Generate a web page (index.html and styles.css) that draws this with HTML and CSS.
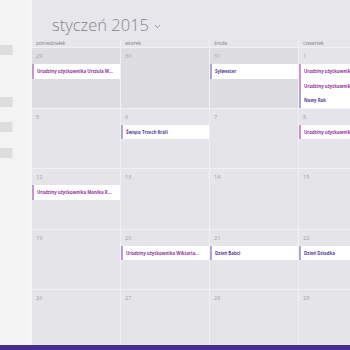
FILE: index.html
```html
<!DOCTYPE html>
<html lang="pl">
<head>
<meta charset="utf-8">
<link rel="stylesheet" href="styles.css">
</head>
<body>
<div class="app">
  <div class="top">
    <aside class="side">
      <div class="btn b1"></div>
      <div class="btn b2"></div>
      <div class="btn b3"></div>
      <div class="btn b4"></div>
    </aside>
    <main class="main">
      <header class="title">
        <span class="month">styczeń 2015</span>
        <svg class="chev" width="7" height="5" viewBox="0 0 7 5"><path d="M1 1.2 L3.5 3.6 L6 1.2" fill="none" stroke="#8a8a8e" stroke-width="0.8"/></svg>
      </header>
      <div class="grid">
        <div class="wd">poniedziałek</div>
        <div class="wd">wtorek</div>
        <div class="wd">środa</div>
        <div class="wd">czwartek</div>

        <div class="day prev"><div class="num">29</div><div class="ev bday">Urodziny użytkownika Urszula W...</div></div>
        <div class="day prev"><div class="num">30</div></div>
        <div class="day prev"><div class="num">31</div><div class="ev hol">Sylwester</div></div>
        <div class="day"><div class="num">1</div><div class="ev bday">Urodziny użytkownika</div><div class="ev bday">Urodziny użytkownika</div><div class="ev hol">Nowy Rok</div></div>

        <div class="day"><div class="num">5</div></div>
        <div class="day"><div class="num">6</div><div class="ev hol">Święto Trzech Króli</div></div>
        <div class="day"><div class="num">7</div></div>
        <div class="day"><div class="num">8</div><div class="ev bday">Urodziny użytkownika</div></div>

        <div class="day"><div class="num">12</div><div class="ev bday">Urodziny użytkownika Monika R...</div></div>
        <div class="day"><div class="num">13</div></div>
        <div class="day"><div class="num">14</div></div>
        <div class="day"><div class="num">15</div></div>

        <div class="day"><div class="num">19</div></div>
        <div class="day"><div class="num">20</div><div class="ev bday">Urodziny użytkownika Wiktoria...</div></div>
        <div class="day"><div class="num">21</div><div class="ev hol">Dzień Babci</div></div>
        <div class="day"><div class="num">22</div><div class="ev hol">Dzień Dziadka</div></div>

        <div class="day"><div class="num">26</div></div>
        <div class="day"><div class="num">27</div></div>
        <div class="day"><div class="num">28</div></div>
        <div class="day"><div class="num">29</div></div>
      </div>
    </main>
  </div>
  <div class="appbar"></div>
</div>
</body>
</html>
```

FILE: styles.css
```css
* { box-sizing: border-box; }
html, body {
  margin: 0;
  padding: 0;
  width: 350px;
  height: 350px;
  overflow: hidden;
  font-family: "Open Sans", "Noto Sans", sans-serif;
}
.app {
  width: 350px;
  height: 350px;
  display: flex;
  flex-direction: column;
}
.top {
  display: flex;
  height: 345px;
  overflow: hidden;
}
.side {
  width: 32px;
  flex: none;
  background: #f3f3f3;
  display: flex;
  flex-direction: column;
  align-items: flex-start;
  border-right: 4px solid #f6f6f6;
}
.btn {
  width: 13px;
  height: 10px;
  background: #dddddd;
  border-right: 1px solid #e9e9e9;
}
.b1 { margin-top: 45px; }
.b2 { margin-top: 42px; }
.b3 { margin-top: 15px; }
.b4 { margin-top: 16px; }
.main {
  flex: 1;
  min-width: 0;
  background: #e7e7eb;
  display: flex;
  flex-direction: column;
  overflow: hidden;
}
.title {
  height: 40px;
  flex: none;
  display: flex;
  align-items: flex-start;
  padding: 15px 0 0 20px;
  gap: 5px;
}
.month {
  font-size: 16.5px;
  line-height: 20px;
  font-weight: 300;
  color: #85858a;
  white-space: nowrap;
}
.chev { margin-top: 9px; }
.grid {
  flex: 1;
  display: grid;
  grid-template-columns: 88px 88px 88px 51px;
  grid-template-rows: 7px repeat(5, 1fr);
  gap: 1px;
  background: #f1f1f4;
  width: 318px;
}
.wd {
  background: #e7e7eb;
  font-size: 5px;
  line-height: 7px;
  color: #7a7a80;
  padding-left: 4px;
  white-space: nowrap;
}
.day {
  background: #e5e5e9;
  overflow: hidden;
  min-height: 0;
}
.day.prev { background: #dddde1; }
.num {
  height: 16px;
  line-height: 16px;
  font-size: 5.5px;
  color: #a0a0a6;
  padding-left: 4px;
}
.ev {
  height: 14.5px;
  line-height: 14.5px;
  background: #ffffff;
  font-size: 4.4px;
  font-weight: 700;
  padding-left: 3px;
  white-space: nowrap;
  overflow: hidden;
}
.ev.bday {
  color: #93339d;
  border-left: 2px solid #c995d0;
}
.ev.hol {
  color: #55409a;
  border-left: 2px solid #aea6d2;
}
.appbar {
  height: 5px;
  flex: none;
  background: #482c8a;
}
```
